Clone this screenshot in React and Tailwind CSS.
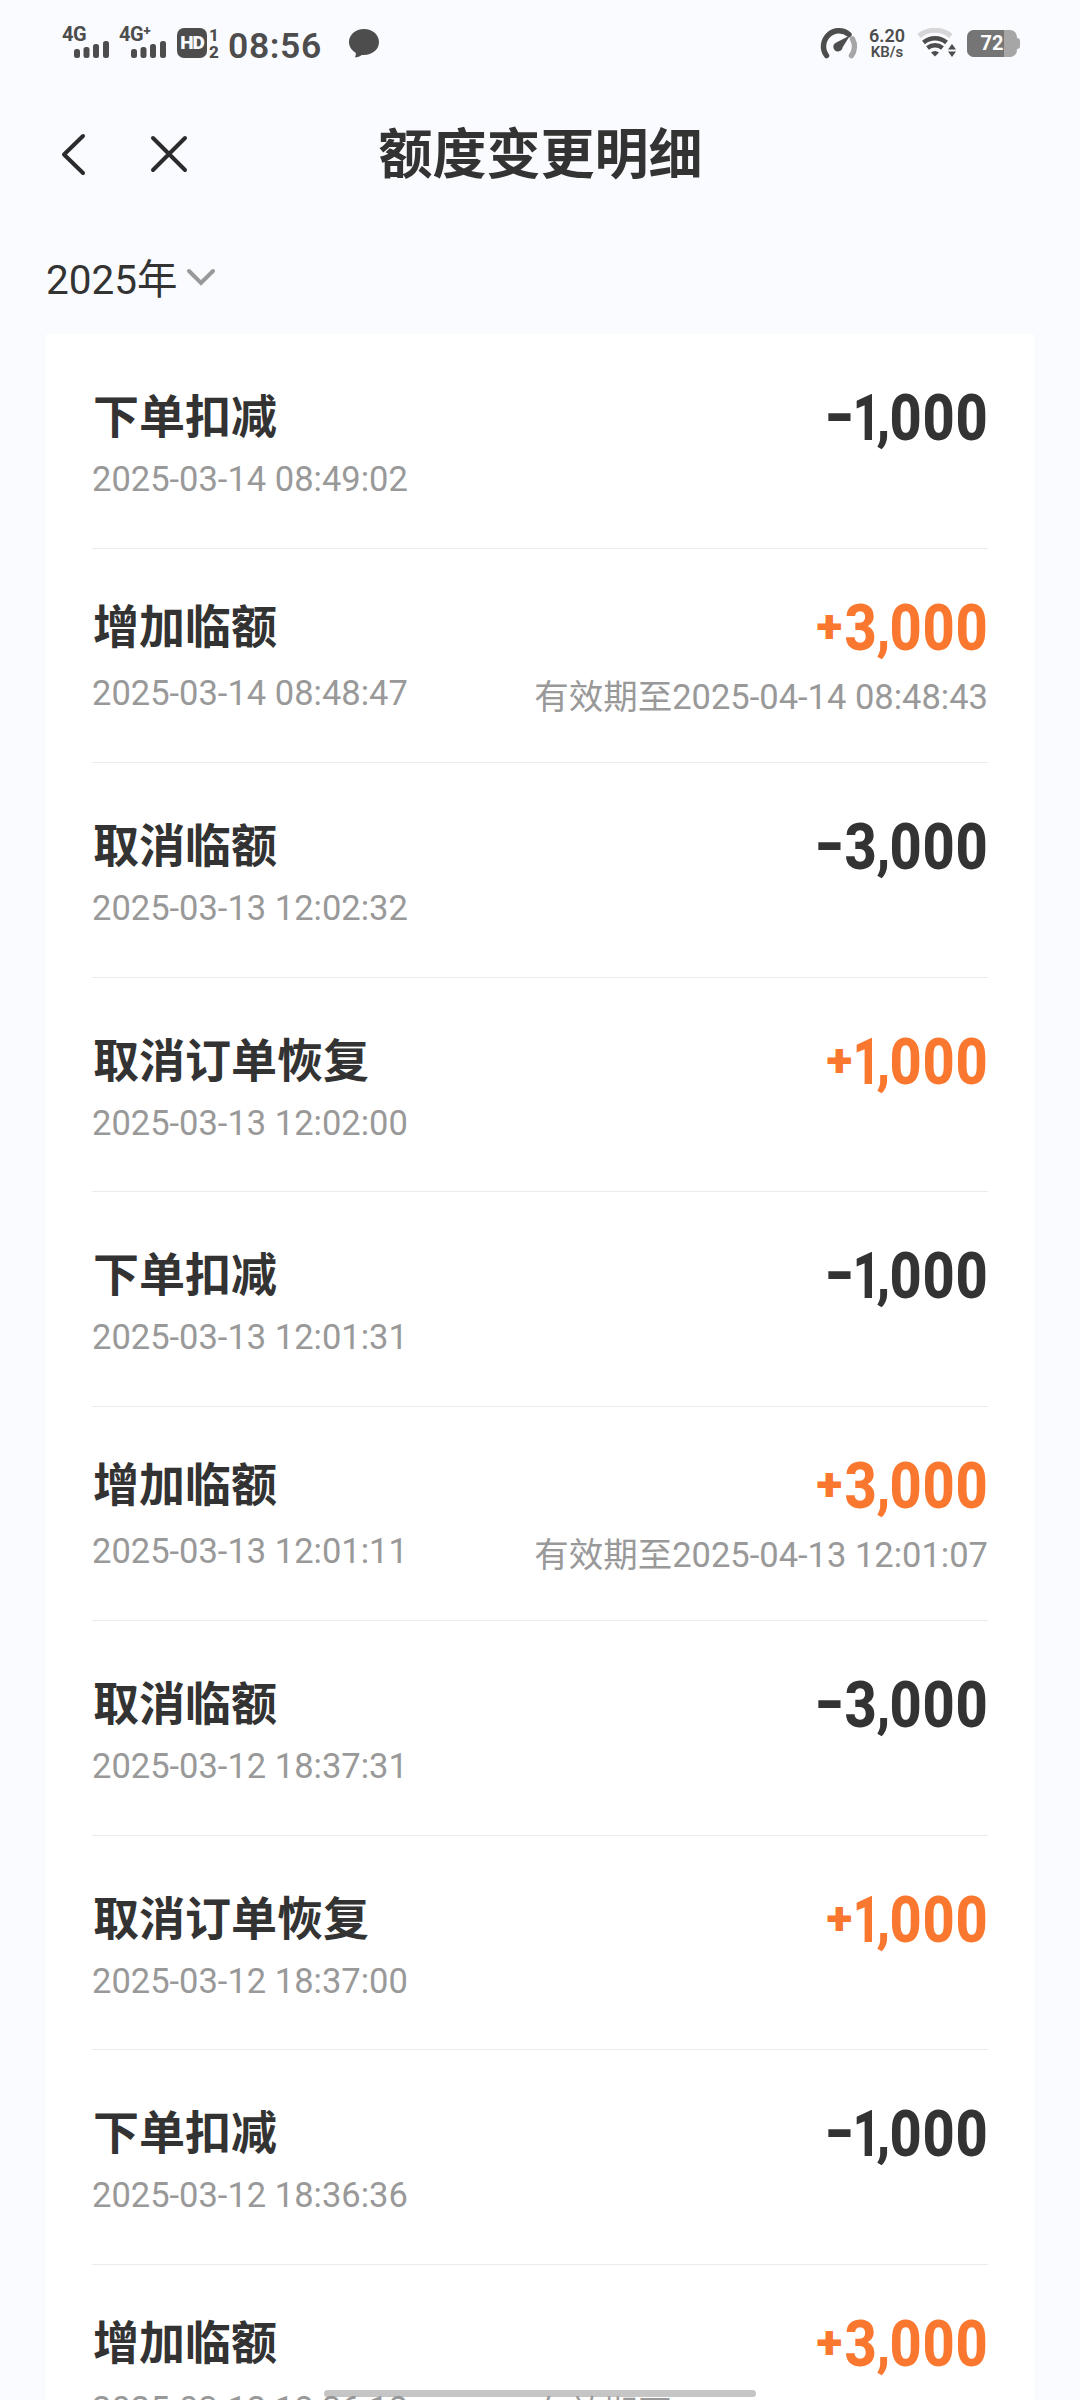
import React from 'react';
import { clsx } from 'clsx';

const records = [
  { title: '下单扣减', time: '2025-03-14 08:49:02', amount: '-1,000' },
  { title: '增加临额', time: '2025-03-14 08:48:47', amount: '+3,000', expire: '2025-04-14 08:48:43' },
  { title: '取消临额', time: '2025-03-13 12:02:32', amount: '-3,000' },
  { title: '取消订单恢复', time: '2025-03-13 12:02:00', amount: '+1,000' },
  { title: '下单扣减', time: '2025-03-13 12:01:31', amount: '-1,000' },
  { title: '增加临额', time: '2025-03-13 12:01:11', amount: '+3,000', expire: '2025-04-13 12:01:07' },
  { title: '取消临额', time: '2025-03-12 18:37:31', amount: '-3,000' },
  { title: '取消订单恢复', time: '2025-03-12 18:37:00', amount: '+1,000' },
  { title: '下单扣减', time: '2025-03-12 18:36:36', amount: '-1,000' },
  { title: '增加临额', time: '2025-03-12 18:36:18', amount: '+3,000', expire: '2025-04-12 18:36:14' },
];

// cell width of each character, digits default to 33px
const charWidth = {
  '-': 'w-[29px]',
  '+': 'w-[29px]',
  ',': 'w-[12px]',
  1: 'w-[23px]',
};

const charScale = {
  '-': 'scale-x-[1.2] -translate-y-[3px]',
  '+': 'font-black scale-x-[0.74] scale-y-[0.7] -translate-y-[1px]',
  ',': 'scale-x-[0.85] scale-y-[0.9]',
  1: 'scale-x-[0.74] translate-x-[1px]',
};

function Amount({ value }) {
  return (
    <div
      className={clsx(
        'flex h-[50px] text-[65px] leading-[52px] font-extrabold',
        value[0] === '+' ? 'text-[#f9772f]' : 'text-[#333333]'
      )}
    >
      {value.split('').map((c, i) => (
        <span key={i} className={clsx('flex justify-center', charWidth[c] || 'w-[33px]')}>
          <span className={clsx('block', charScale[c] || 'scale-x-[0.86]')}>{c}</span>
        </span>
      ))}
    </div>
  );
}

function Row({ item }) {
  return (
    <div className="h-[214.5px] shrink-0 border-b border-[#ebebeb] flex justify-between">
      <div className={item.expire ? 'pt-[53px]' : 'pt-[58px]'}>
        <div className="pl-px text-[46px] leading-[50px] font-bold text-[#333333]">{item.title}</div>
        <div className={clsx('text-[34.5px] leading-[40px] text-[#999999]', item.expire ? 'mt-[21px]' : 'mt-[17px]')}>
          {item.time}
        </div>
      </div>
      <div className={clsx('flex flex-col items-end', item.expire ? 'pt-[53px]' : 'pt-[58px]')}>
        <Amount value={item.amount} />
        {item.expire && (
          <div className="mt-[25px] text-[34.5px] leading-[40px] text-[#999999]">有效期至{item.expire}</div>
        )}
      </div>
    </div>
  );
}

function Signal({ label }) {
  return (
    <div className="relative w-[48px] h-[32px]">
      <span className="absolute left-0 -top-px text-[20px] leading-[18px] font-bold tracking-[-0.5px]">{label}</span>
      <svg className="absolute left-[12px] top-[15px]" width="36" height="17" fill="currentColor">
        <rect x="0" y="8" width="6" height="9" rx="2.5" />
        <rect x="9.5" y="6" width="6" height="11" rx="2.5" />
        <rect x="19" y="3" width="6" height="14" rx="2.5" />
        <rect x="29" y="0" width="6" height="17" rx="2.5" />
      </svg>
    </div>
  );
}

function StatusBar() {
  return (
    <div className="h-[88px] shrink-0 flex items-start justify-between pl-[62px] pr-[60px] pt-[26px] text-[#4d4d4d]">
      <div className="flex items-start">
        <Signal label="4G" />
        <div className="ml-[9px]">
          <Signal label="4G⁺" />
        </div>
        <div className="ml-[10px] mt-[2px] w-[30px] h-[30px] rounded-[7px] bg-[#4d4d4d] text-[#fafbff] text-[19px] leading-[30px] font-black text-center tracking-[-1px]">
          HD
        </div>
        <div className="ml-[2px] mt-px w-[10px] text-[17px] leading-[17px] font-extrabold text-center">
          <div>1</div>
          <div>2</div>
        </div>
        <div className="ml-[9px] mt-px text-[35.5px] leading-[38px] font-semibold tracking-[0.6px]">08:56</div>
        <svg className="ml-[26px] mt-[2px]" width="32" height="31" viewBox="0 0 32 31" fill="currentColor">
          <path d="M16 1C7.500 1 1 6.800 1 14c0 4.500 2.600 8.300 6.500 10.600.6 1.800.3 3.400-.7 4.600 2.700 0 5-.9 7-2.300C23.500 27.700 31 22 31 14 31 6.800 24.500 1 16 1z" />
        </svg>
      </div>
      <div className="flex items-start">
        <svg className="mt-px" width="38" height="34" viewBox="0 0 38 34" fill="none">
          <path d="M6.500 28.500A15.500 15.500 0 0 1 29 7.500" stroke="#4d4d4d" strokeWidth="5.500" strokeLinecap="round" />
          <path d="M32.500 12A15.500 15.500 0 0 1 31.500 28.500" stroke="#a6a6a6" strokeWidth="5.500" strokeLinecap="round" />
          <path d="M30 8.500L22.500 20.500A4.600 4.600 0 1 1 15.800 15.800z" fill="#4d4d4d" />
        </svg>
        <div className="ml-[10px] mt-px w-[38px] text-center font-semibold">
          <div className="text-[18px] leading-[17px]">6.20</div>
          <div className="text-[15px] leading-[17px]">KB/s</div>
        </div>
        <svg className="ml-[11px] mt-[2px]" width="40" height="30" viewBox="0 0 40 30" fill="none">
          <path d="M2 8a25 25 0 0 1 32 0" stroke="#d6d6d8" strokeWidth="5" />
          <path d="M6.500 14.500a18 18 0 0 1 23 0" stroke="#4d4d4d" strokeWidth="4.500" />
          <path d="M10.500 20a12 12 0 0 1 15 0" stroke="#4d4d4d" strokeWidth="4.500" />
          <path d="M14 24.500a6 6 0 0 1 8 0l-4 4z" fill="#4d4d4d" />
          <path d="M35 16l4 5.500h-8zM35 29l4-5.500h-8z" fill="#4d4d4d" />
        </svg>
        <div className="ml-[10px] mt-[4px] flex items-center">
          <div className="relative w-[50px] h-[27px] rounded-[7px] overflow-hidden bg-[#a6a6a6]">
            <div className="h-full w-[37px] bg-[#757575]" />
            <span className="absolute inset-0 text-center text-[20px] leading-[27px] font-bold text-white">72</span>
          </div>
          <div className="w-[3px] h-[11px] rounded-r-[3px] bg-[#a6a6a6]" />
        </div>
      </div>
    </div>
  );
}

export default function App() {
  return (
    <div className="relative w-[1080px] h-[2400px] overflow-hidden bg-[#fafbff] flex flex-col font-['Roboto','Noto_Sans_CJK_SC',sans-serif]">
      <StatusBar />

      {/* title bar */}
      <div className="h-[132px] shrink-0 grid grid-cols-[1fr_auto_1fr] items-center text-[#333333]">
        <div className="flex items-center pl-[61px]">
          <svg width="26" height="44" viewBox="0 0 26 44" fill="none" stroke="#2b2b2d" strokeWidth="4" strokeLinecap="round" strokeLinejoin="round">
            <path d="M22 4L3 22.500L22 41" />
          </svg>
          <svg className="ml-[62px]" width="40" height="40" viewBox="0 0 40 40" fill="none" stroke="#2b2b2d" strokeWidth="4" strokeLinecap="round">
            <path d="M4 4L36 36M36 4L4 36" />
          </svg>
        </div>
        <h1 className="pt-[3px] pl-px text-[54px] leading-[60px] font-bold">额度变更明细</h1>
      </div>

      {/* year filter */}
      <div className="h-[114px] shrink-0 pl-[46px] pt-[35px] flex items-start">
        <span className="text-[40.5px] leading-[50px] text-[#333333]">2025年</span>
        <svg className="ml-[8px] mt-[13px]" width="30" height="20" viewBox="0 0 30 20" fill="none" stroke="#999999" strokeWidth="4" strokeLinecap="round">
          <path d="M3 3L15 15L27 3" />
        </svg>
      </div>

      <div className="mx-[46px] px-[46px] flex-1 min-h-0 bg-white flex flex-col">
        {records.map((item) => (
          <Row key={item.time} item={item} />
        ))}
      </div>

      {/* home indicator */}
      <div className="absolute left-[324px] top-[2390px] w-[432px] h-[7px] rounded-full bg-[#8c8c8c]/50" />
    </div>
  );
}
